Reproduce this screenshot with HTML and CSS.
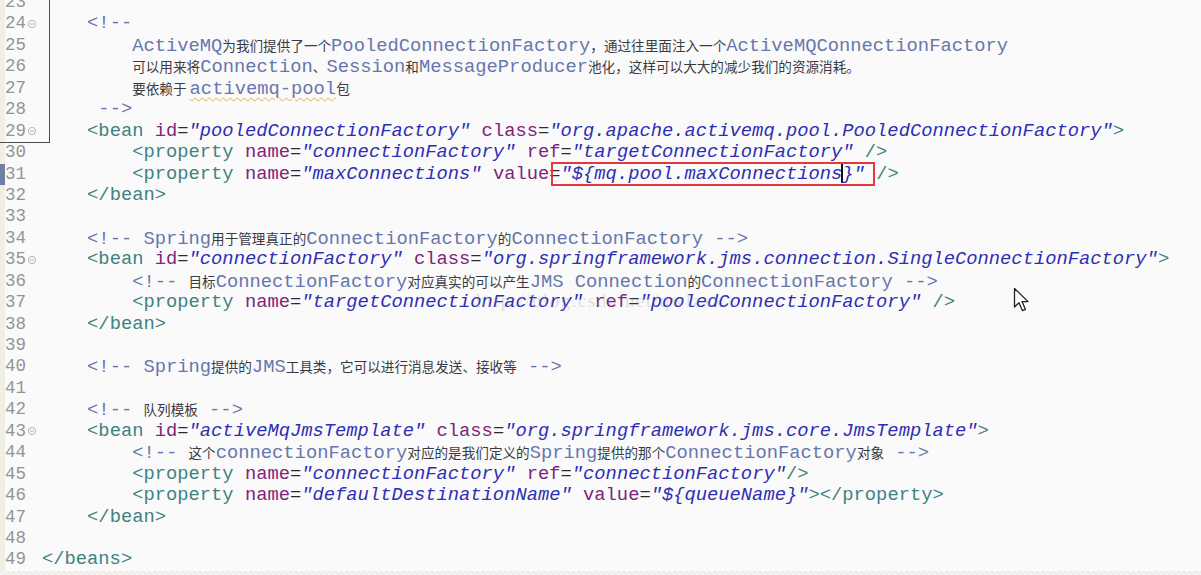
FILE: index.html
```html
<!DOCTYPE html>
<html lang="zh">
<head>
  <meta charset="UTF-8" />
  <title>applicationContext-activemq.xml</title>
  <link rel="stylesheet" href="styles.css">
</head>
<body>
  <div class="editor">
    <div class="lines">
      <div class="line"><span class="mark"></span><span class="ln">23</span><span class="fold"></span><span class="code"></span></div>
      <div class="line"><span class="mark"></span><span class="ln">24</span><span class="fold"><svg width="10" height="10" viewBox="0 0 10 10"><circle cx="5" cy="5" r="3.6" fill="none" stroke="#b4b4b4"/><path d="M3 5h4" stroke="#b4b4b4"/></svg></span><span class="code">    <span class="c">&lt;!--</span></span></div>
      <div class="line"><span class="mark"></span><span class="ln">25</span><span class="fold"></span><span class="code">        <span class="c">ActiveMQ<span class="z">为我们提供了一个</span>PooledConnectionFactory<span class="z">，通过往里面注入一个</span>ActiveMQConnectionFactory</span></span></div>
      <div class="line"><span class="mark"></span><span class="ln">26</span><span class="fold"></span><span class="code">        <span class="c"><span class="z">可以用来将</span>Connection<span class="z">、</span>Session<span class="z">和</span>MessageProducer<span class="z">池化，这样可以大大的减少我们的资源消耗。</span></span></span></div>
      <div class="line"><span class="mark"></span><span class="ln">27</span><span class="fold"></span><span class="code">        <span class="c"><span class="z">要依赖于 </span><span class="spell">activemq-pool</span><span class="z">包</span></span></span></div>
      <div class="line"><span class="mark"></span><span class="ln">28</span><span class="fold"></span><span class="code">     <span class="c">--&gt;</span></span></div>
      <div class="line"><span class="mark"></span><span class="ln">29</span><span class="fold"><svg width="10" height="10" viewBox="0 0 10 10"><circle cx="5" cy="5" r="3.6" fill="none" stroke="#b4b4b4"/><path d="M3 5h4" stroke="#b4b4b4"/></svg></span><span class="code">    <span class="t">&lt;bean</span> <span class="a">id</span>=<span class="v">"pooledConnectionFactory"</span> <span class="a">class</span>=<span class="v">"org.apache.activemq.pool.PooledConnectionFactory"</span><span class="t">&gt;</span></span></div>
      <div class="line"><span class="mark"></span><span class="ln">30</span><span class="fold"></span><span class="code">        <span class="t">&lt;property</span> <span class="a">name</span>=<span class="v">"connectionFactory"</span> <span class="a">ref</span>=<span class="v">"targetConnectionFactory"</span> <span class="t">/&gt;</span></span></div>
      <div class="line"><span class="mark current"></span><span class="ln">31</span><span class="fold"></span><span class="code">        <span class="t">&lt;property</span> <span class="a">name</span>=<span class="v">"maxConnections"</span> <span class="a">value</span>=<span class="v boxed">"${mq.pool.maxConnections<span class="caret"></span>}"</span> <span class="t">/&gt;</span></span></div>
      <div class="line"><span class="mark"></span><span class="ln">32</span><span class="fold"></span><span class="code">    <span class="t">&lt;/bean&gt;</span></span></div>
      <div class="line"><span class="mark"></span><span class="ln">33</span><span class="fold"></span><span class="code"></span></div>
      <div class="line"><span class="mark"></span><span class="ln">34</span><span class="fold"></span><span class="code">    <span class="c">&lt;!-- Spring<span class="z">用于管理真正的</span>ConnectionFactory<span class="z">的</span>ConnectionFactory --&gt;</span></span></div>
      <div class="line"><span class="mark"></span><span class="ln">35</span><span class="fold"><svg width="10" height="10" viewBox="0 0 10 10"><circle cx="5" cy="5" r="3.6" fill="none" stroke="#b4b4b4"/><path d="M3 5h4" stroke="#b4b4b4"/></svg></span><span class="code">    <span class="t">&lt;bean</span> <span class="a">id</span>=<span class="v">"connectionFactory"</span> <span class="a">class</span>=<span class="v">"org.springframework.jms.connection.SingleConnectionFactory"</span><span class="t">&gt;</span></span></div>
      <div class="line"><span class="mark"></span><span class="ln">36</span><span class="fold"></span><span class="code">        <span class="c">&lt;!-- <span class="z">目标</span>ConnectionFactory<span class="z">对应真实的可以产生</span>JMS Connection<span class="z">的</span>ConnectionFactory --&gt;</span></span></div>
      <div class="line"><span class="mark"></span><span class="ln">37</span><span class="fold"></span><span class="code">        <span class="t">&lt;property</span> <span class="a">name</span>=<span class="v">"targetConnectionFactory"</span> <span class="a">ref</span>=<span class="v">"pooledConnectionFactory"</span> <span class="t">/&gt;</span></span></div>
      <div class="line"><span class="mark"></span><span class="ln">38</span><span class="fold"></span><span class="code">    <span class="t">&lt;/bean&gt;</span></span></div>
      <div class="line"><span class="mark"></span><span class="ln">39</span><span class="fold"></span><span class="code"></span></div>
      <div class="line"><span class="mark"></span><span class="ln">40</span><span class="fold"></span><span class="code">    <span class="c">&lt;!-- Spring<span class="z">提供的</span>JMS<span class="z">工具类，它可以进行消息发送、接收等</span> --&gt;</span></span></div>
      <div class="line"><span class="mark"></span><span class="ln">41</span><span class="fold"></span><span class="code"></span></div>
      <div class="line"><span class="mark"></span><span class="ln">42</span><span class="fold"></span><span class="code">    <span class="c">&lt;!-- <span class="z">队列模板</span> --&gt;</span></span></div>
      <div class="line"><span class="mark"></span><span class="ln">43</span><span class="fold"><svg width="10" height="10" viewBox="0 0 10 10"><circle cx="5" cy="5" r="3.6" fill="none" stroke="#b4b4b4"/><path d="M3 5h4" stroke="#b4b4b4"/></svg></span><span class="code">    <span class="t">&lt;bean</span> <span class="a">id</span>=<span class="v">"activeMqJmsTemplate"</span> <span class="a">class</span>=<span class="v">"org.springframework.jms.core.JmsTemplate"</span><span class="t">&gt;</span></span></div>
      <div class="line"><span class="mark"></span><span class="ln">44</span><span class="fold"></span><span class="code">        <span class="c">&lt;!-- <span class="z">这个</span>connectionFactory<span class="z">对应的是我们定义的</span>Spring<span class="z">提供的那个</span>ConnectionFactory<span class="z">对象</span> --&gt;</span></span></div>
      <div class="line"><span class="mark"></span><span class="ln">45</span><span class="fold"></span><span class="code">        <span class="t">&lt;property</span> <span class="a">name</span>=<span class="v">"connectionFactory"</span> <span class="a">ref</span>=<span class="v">"connectionFactory"</span><span class="t">/&gt;</span></span></div>
      <div class="line"><span class="mark"></span><span class="ln">46</span><span class="fold"></span><span class="code">        <span class="t">&lt;property</span> <span class="a">name</span>=<span class="v">"defaultDestinationName"</span> <span class="a">value</span>=<span class="v">"${queueName}"</span><span class="t">&gt;&lt;/property&gt;</span></span></div>
      <div class="line"><span class="mark"></span><span class="ln">47</span><span class="fold"></span><span class="code">    <span class="t">&lt;/bean&gt;</span></span></div>
      <div class="line"><span class="mark"></span><span class="ln">48</span><span class="fold"></span><span class="code"></span></div>
      <div class="line"><span class="mark"></span><span class="ln">49</span><span class="fold"></span><span class="code"><span class="t">&lt;/beans&gt;</span></span></div>
    </div>
    <div class="hscroll"></div>

    <!-- рамка вокруг номеров строк (выделение на записи экрана) -->
    <div class="gutter-frame"></div>
    <div class="watermark">http://blog.csdn.net/qwlzxx</div>
    <svg class="pointer" width="18" height="26" viewBox="0 0 18 26">
      <path d="M1.5 1.5 L1.5 20 L6 15.8 L9.4 23.6 L12.4 22.3 L9 14.6 L15 14.6 Z" fill="#fff" stroke="#222" stroke-width="1.3" stroke-linejoin="round"/>
    </svg>
  </div>
</body>
</html>
```

FILE: styles.css
```css
body {
  margin: 0;
  background: #fafafa;
  overflow: hidden;
}

.editor {
  position: relative;
  height: 575px;
  overflow: hidden;
  background: #fafafa;
  font-family: "Liberation Mono", "Noto Sans CJK SC", monospace;
}

.lines {
  margin-top: -8px;
}

.line {
  display: flex;
  height: 21.44px;
  line-height: 21.44px;
  white-space: pre;
}

/* левая полоса маркеров */
.mark {
  width: 5px;
  flex-shrink: 0;
  background: #f1efe4;
}

.mark.current {
  background: #7080a2;
}

.ln {
  width: 22px;
  flex-shrink: 0;
  font-size: 17.5px;
  color: #949494;
}

.fold {
  width: 15px;
  flex-shrink: 0;
  display: flex;
  align-items: center;
}

.code {
  font-size: 18.8px;
  color: #2b2b2b;
}

/* подсветка синтаксиса */
.t { color: #3f8282; }
.a { color: #80237a; }
.v { color: #2e2eb4; font-style: italic; }
.c { color: #6876ac; }

.z {
  font-family: "Noto Sans CJK SC", sans-serif;
  font-size: 13.6px;
  color: #3a3a44;
}

.spell {
  text-decoration: underline wavy #e6a45a;
  text-decoration-thickness: 1px;
  text-underline-offset: 3px;
}

.boxed {
  position: relative;
}

.boxed::after {
  content: "";
  position: absolute;
  left: -10px;
  right: -10px;
  top: -1px;
  bottom: -1px;
  border: 2px solid #e6373c;
}

.caret {
  display: inline-block;
  width: 0;
  height: 19px;
  border-left: 2px solid #111;
  margin: 0 -1px;
  vertical-align: -4px;
}

.hscroll {
  height: 6px;
  background: repeating-linear-gradient(45deg, #efebe7 0 2px, #f6f3f0 2px 4px);
}

.gutter-frame {
  position: absolute;
  left: 0;
  top: -2px;
  width: 49px;
  height: 144px;
  border-right: 1.5px solid #4e4e4e;
  border-bottom: 1.5px solid #4e4e4e;
}

.watermark {
  position: absolute;
  left: 476px;
  top: 290px;
  font-family: "Liberation Serif", serif;
  font-size: 19px;
  letter-spacing: 1.5px;
  color: rgba(150, 150, 150, 0.28);
}

.pointer {
  position: absolute;
  left: 1013px;
  top: 287px;
}
```
